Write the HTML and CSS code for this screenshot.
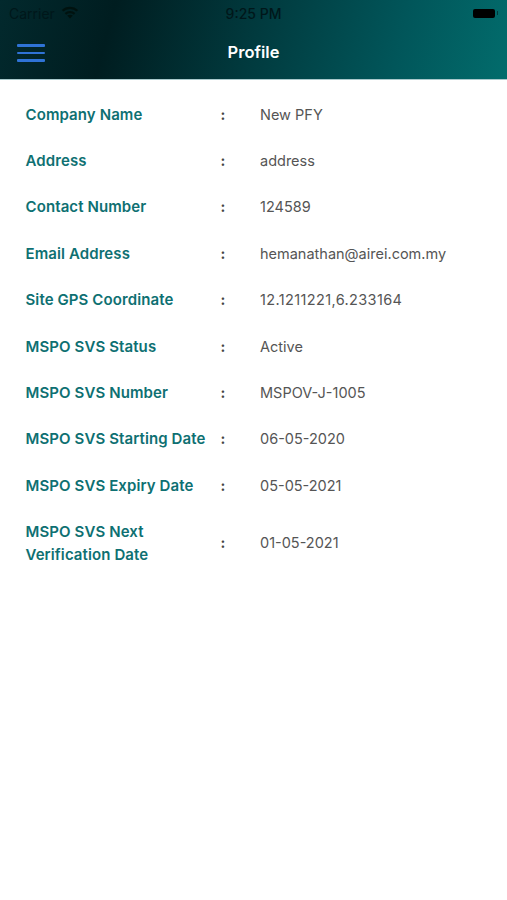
FILE: index.html
```html
<!DOCTYPE html>
<html lang="en">
<head>
    <meta charset="UTF-8">
    <title>Profile</title>
    <link rel="stylesheet" href="styles.css">
</head>
<body>
    <header class="header">
        <div class="statusbar">
            <div class="status-left">
                <span>Carrier</span>
                <svg class="wifi" width="18" height="13" viewBox="0 0 18 13">
                    <path d="M9 12.6 L6.2 9.6 C7.8 8.4 10.2 8.4 11.8 9.6 Z" fill="#00120f"/>
                    <path d="M4.4 7.8 C7 5.6 11 5.6 13.6 7.8 M1.6 4.8 C5.8 1 12.2 1 16.4 4.8" fill="none" stroke="#00120f" stroke-width="2.2"/>
                </svg>
            </div>
            <div class="status-time">9:25 PM</div>
            <div class="battery"><div class="battery-fill"></div><div class="battery-nub"></div></div>
        </div>
        <div class="navbar">
            <button class="menu-btn"><span></span><span></span><span></span></button>
            <div class="nav-title">Profile</div>
        </div>
    </header>

    <div class="details">
        <div class="row">
            <div class="label">Company Name</div><div class="colon">:</div><div class="value">New PFY</div>
        </div>
        <div class="row">
            <div class="label">Address</div><div class="colon">:</div><div class="value">address</div>
        </div>
        <div class="row">
            <div class="label">Contact Number</div><div class="colon">:</div><div class="value">124589</div>
        </div>
        <div class="row">
            <div class="label">Email Address</div><div class="colon">:</div><div class="value">hemanathan@airei.com.my</div>
        </div>
        <div class="row">
            <div class="label">Site GPS Coordinate</div><div class="colon">:</div><div class="value value-gps">12.1211221,6.233164</div>
        </div>
        <div class="row">
            <div class="label">MSPO SVS Status</div><div class="colon">:</div><div class="value">Active</div>
        </div>
        <div class="row">
            <div class="label">MSPO SVS Number</div><div class="colon">:</div><div class="value">MSPOV-J-1005</div>
        </div>
        <div class="row">
            <div class="label">MSPO SVS Starting Date</div><div class="colon">:</div><div class="value">06-05-2020</div>
        </div>
        <div class="row">
            <div class="label">MSPO SVS Expiry Date</div><div class="colon">:</div><div class="value">05-05-2021</div>
        </div>
        <div class="row">
            <div class="label">MSPO SVS Next<br>Verification Date</div><div class="colon">:</div><div class="value">01-05-2021</div>
        </div>
    </div>
</body>
</html>
```

FILE: styles.css
```css
body {
    margin: 0;
    background-color: #fff;
    font-family: Inter, "Liberation Sans", sans-serif;
}
.header {
    height: 79px;
    background: linear-gradient(105deg, #02292d 0%, #001d20 22%, #013a3e 50%, #01565a 78%, #026c6c 100%);
    border-bottom: 1px solid #a9c9cc;
}
.statusbar {
    display: grid;
    grid-template-columns: 1fr auto 1fr;
    align-items: center;
    height: 26px;
    padding: 0 9px;
    font-size: 14px;
    color: #00171a;
}
.status-left {
    display: flex;
    align-items: center;
    gap: 6px;
}
.wifi {
    margin-bottom: 2px;
}
.status-time {
    font-weight: 500;
}
.battery {
    justify-self: end;
    display: flex;
    align-items: center;
    gap: 2px;
}
.battery-fill {
    height: 9px;
    width: 22px;
    background-color: #000;
    border-radius: 2px;
}
.battery-nub {
    width: 1px;
    height: 4px;
    background-color: #01383c;
}
.navbar {
    display: flex;
    align-items: center;
    justify-content: center;
    position: relative;
    height: 52px;
}
.menu-btn {
    position: absolute;
    left: 17px;
    top: 18px;
    display: flex;
    flex-direction: column;
    gap: 5px;
    width: 28px;
    padding: 0;
    border: none;
    background: none;
}
.menu-btn span {
    height: 2.5px;
    background-color: #2f73d6;
    border-radius: 1px;
}
.nav-title {
    font-size: 16.5px;
    font-weight: 600;
    color: #fff;
}
.details {
    padding-top: 11.6px;
}
.row {
    display: flex;
    align-items: center;
    padding: 12px 0 12px 25.5px;
    font-size: 14.5px;
    line-height: 22.4px;
}
.label {
    width: 195px;
    font-size: 15px;
    letter-spacing: 0.1px;
    font-weight: 600;
    color: #0e7072;
}
.colon {
    width: 39.5px;
    font-weight: 700;
    color: #444;
}
.value {
    color: #555;
}
.value-gps {
    letter-spacing: 0.37px;
}
```
